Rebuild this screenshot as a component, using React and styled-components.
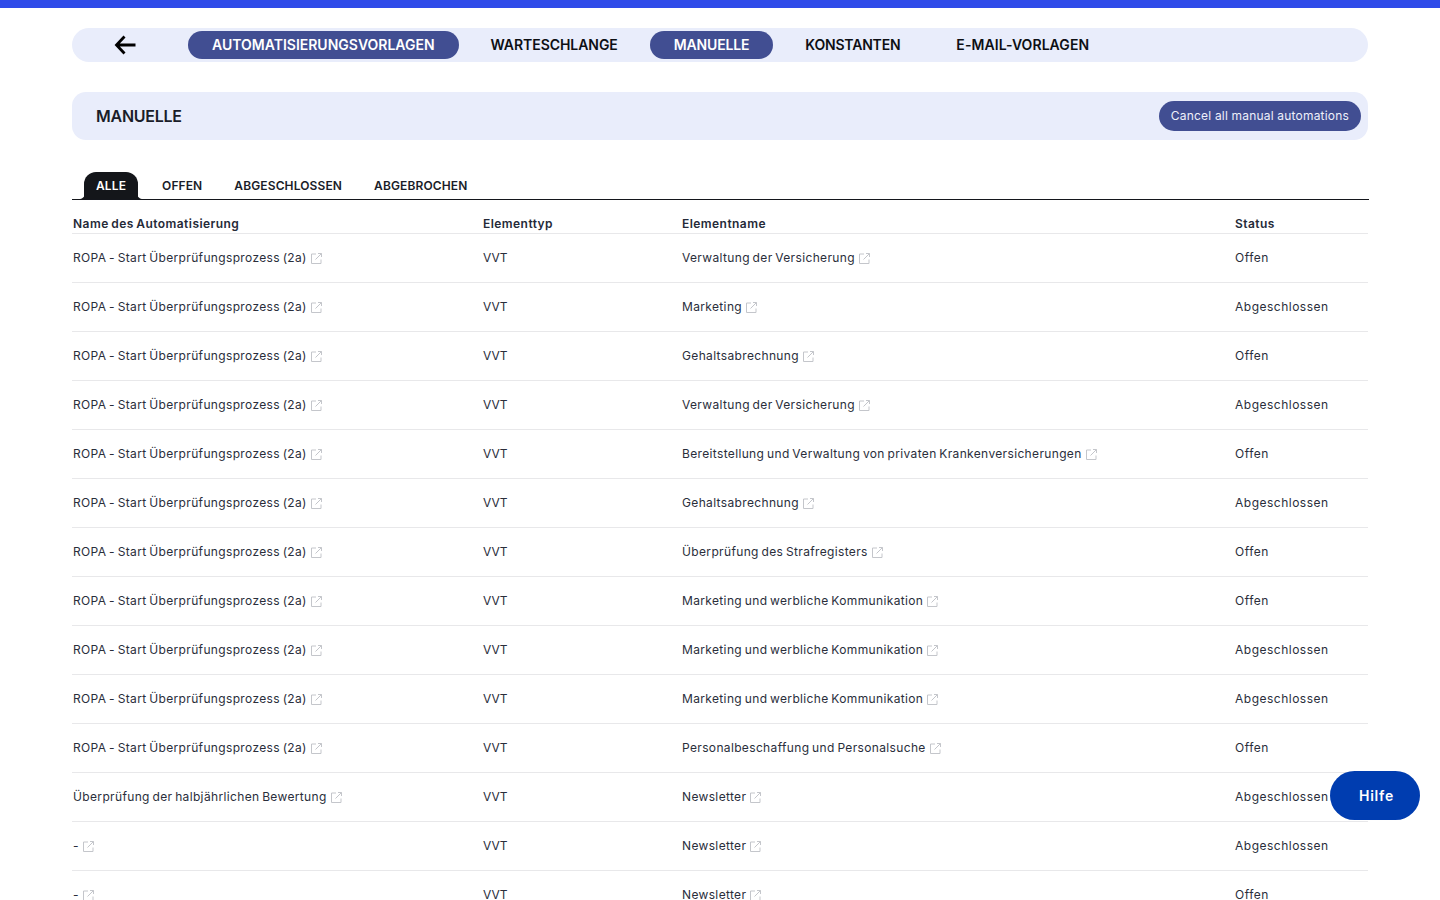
import React from "react";
import styled, { createGlobalStyle } from "styled-components";

const Global = createGlobalStyle`
  html, body { margin: 0; height: 100%; overflow: hidden; background: #fff; }
  body { font-family: Inter, "Liberation Sans", sans-serif; color: #1f2430; }
  * { box-sizing: border-box; }
`;

const Page = styled.div`
  height: 100vh;
  overflow: hidden;
  border-top: 8px solid #2f4be9;
  padding: 20px 72px 0;
`;

const Nav = styled.nav`
  display: flex;
  align-items: center;
  gap: 8px;
  height: 34px;
  border-radius: 17px;
  background: #e9edfb;
`;

const BackButton = styled.button`
  width: 108px;
  height: 28px;
  padding: 0;
  border: 0;
  background: none;
  color: #000;
  display: flex;
  align-items: center;
  justify-content: center;
`;

const NavItem = styled.a`
  height: 28px;
  padding: 0 24px 2px;
  border-radius: 14px;
  display: flex;
  align-items: center;
  font-size: 14px;
  font-weight: 600;
  letter-spacing: ${(p) => p.$spacing || 0}px;
  color: ${(p) => (p.$active ? "#fff" : "#0d0f14")};
  background: ${(p) => (p.$active ? "#414e92" : "transparent")};
`;

const Header = styled.header`
  margin-top: 30px;
  height: 48px;
  border-radius: 14px;
  background: #e9edfb;
  padding: 0 7px 0 24px;
  display: flex;
  align-items: center;
  justify-content: space-between;
`;

const Title = styled.h1`
  margin: 0;
  font-size: 16px;
  font-weight: 600;
  letter-spacing: -0.25px;
  color: #1a1d29;
`;

const CancelButton = styled.button`
  height: 30px;
  padding: 0 12px 2px;
  border: 0;
  border-radius: 15px;
  background: #414e92;
  color: #eef0fb;
  font: 400 12px Inter, sans-serif;
  letter-spacing: 0.19px;
`;

const Tabs = styled.div`
  margin-top: 32px;
  width: 1297px;
  height: 28px;
  padding-left: 12px;
  display: flex;
  align-items: stretch;
  border-bottom: 1px solid #14161c;
`;

const Tab = styled.a`
  position: relative;
  display: flex;
  align-items: center;
  padding: ${(p) => (p.$active ? "0 12px" : "0 16px")};
  margin-right: ${(p) => (p.$active ? "8px" : "0")};
  font-size: 12px;
  font-weight: 600;
  letter-spacing: 0.12px;
  color: ${(p) => (p.$active ? "#fff" : "#1a1d29")};
  background: ${(p) => (p.$active ? "#14161a" : "transparent")};
  border-radius: ${(p) => (p.$active ? "12px 12px 0 0" : "0")};
`;

const Flare = styled.svg`
  position: absolute;
  bottom: 0;
  width: 6px;
  height: 6px;
  ${(p) => (p.$side === "left" ? "left: -5px;" : "right: -5px;")}
`;

const Table = styled.table`
  width: 1296px;
  border-collapse: collapse;
  table-layout: fixed;
`;

const HeadCell = styled.th`
  height: 33px;
  padding: 14px 1px 0;
  text-align: left;
  font-size: 12px;
  font-weight: 600;
  letter-spacing: 0.44px;
  word-spacing: -0.9px;
  color: #252a38;
  vertical-align: middle;
  border-bottom: 1px solid #e8e8ea;
  &:nth-child(1) { width: 410px; }
  &:nth-child(2) { width: 199px; }
  &:nth-child(3) { width: 553px; }
`;

const Cell = styled.td`
  height: 49px;
  padding: 0 1px;
  font-size: 12px;
  font-weight: 400;
  letter-spacing: ${(p) => (p.$spacing === undefined ? 0.35 : p.$spacing)}px;
  word-spacing: -1px;
  color: #2a2e3b;
  vertical-align: middle;
  border-bottom: 1px solid #e8e8ea;
  white-space: nowrap;
`;

const LinkIcon = styled.svg`
  width: 11px;
  height: 11px;
  margin-left: 4px;
  vertical-align: -2px;
  color: #c4c6cb;
`;

const HelpButton = styled.button`
  position: fixed;
  left: 1330px;
  top: 771px;
  width: 90px;
  height: 49px;
  padding: 0 0 0 3px;
  border: 0;
  border-radius: 25px;
  background: #003db0;
  color: #fff;
  font: 600 14px Inter, sans-serif;
  letter-spacing: 0.8px;
`;

const External = () => (
  <LinkIcon viewBox="0 0 11 11" fill="none" stroke="currentColor" strokeWidth="1">
    <path d="M5 1H.5v9.5H10V6.5" />
    <path d="M4.5 6.5L10.5.5M7 .5h3.5V4" />
  </LinkIcon>
);

const tabs = ["ALLE", "OFFEN", "ABGESCHLOSSEN", "ABGEBROCHEN"];
const ropa = "ROPA - Start Überprüfungsprozess (2a)";
const rows = [
  [ropa, "Verwaltung der Versicherung", "Offen"],
  [ropa, "Marketing", "Abgeschlossen"],
  [ropa, "Gehaltsabrechnung", "Offen"],
  [ropa, "Verwaltung der Versicherung", "Abgeschlossen"],
  [ropa, "Bereitstellung und Verwaltung von privaten Krankenversicherungen", "Offen"],
  [ropa, "Gehaltsabrechnung", "Abgeschlossen"],
  [ropa, "Überprüfung des Strafregisters", "Offen"],
  [ropa, "Marketing und werbliche Kommunikation", "Offen"],
  [ropa, "Marketing und werbliche Kommunikation", "Abgeschlossen"],
  [ropa, "Marketing und werbliche Kommunikation", "Abgeschlossen"],
  [ropa, "Personalbeschaffung und Personalsuche", "Offen"],
  ["Überprüfung der halbjährlichen Bewertung", "Newsletter", "Abgeschlossen"],
  ["-", "Newsletter", "Abgeschlossen"],
  ["-", "Newsletter", "Offen"],
];

export default function App() {
  return (
    <>
      <Global />
      <Page>
        <Nav>
          <BackButton aria-label="Zurück">
            <svg width="24" height="24" viewBox="0 0 24 24" fill="none" stroke="currentColor" strokeWidth="2.8">
              <path d="M21.5 12H3M10.5 3.5L2.5 12l8 8.5" />
            </svg>
          </BackButton>
          <NavItem $active>AUTOMATISIERUNGSVORLAGEN</NavItem>
          <NavItem $spacing={-0.06}>WARTESCHLANGE</NavItem>
          <NavItem $active $spacing={-0.15}>MANUELLE</NavItem>
          <NavItem $spacing={-0.2}>KONSTANTEN</NavItem>
          <NavItem $spacing={0.07}>E-MAIL-VORLAGEN</NavItem>
        </Nav>
        <Header>
          <Title>MANUELLE</Title>
          <CancelButton>Cancel all manual automations</CancelButton>
        </Header>
        <Tabs>
          {tabs.map((t, i) => (
            <Tab key={t} $active={i === 0}>
              {i === 0 && (
                <>
                  <Flare $side="left" viewBox="0 0 6 6"><path d="M6 0v6H0c3 0 6-2 6-6z" fill="#14161a" /></Flare>
                  <Flare $side="right" viewBox="0 0 6 6"><path d="M0 0v6h6C3 6 0 4 0 0z" fill="#14161a" /></Flare>
                </>
              )}
              {t}
            </Tab>
          ))}
        </Tabs>
        <Table>
          <thead>
            <tr>
              <HeadCell>Name des Automatisierung</HeadCell>
              <HeadCell>Elementtyp</HeadCell>
              <HeadCell>Elementname</HeadCell>
              <HeadCell>Status</HeadCell>
            </tr>
          </thead>
          <tbody>
            {rows.map((r, i) => (
              <tr key={i}>
                <Cell>{r[0]}<External /></Cell>
                <Cell $spacing={0}>VVT</Cell>
                <Cell>{r[1]}<External /></Cell>
                <Cell $spacing={0.5}>{r[2]}</Cell>
              </tr>
            ))}
          </tbody>
        </Table>
      </Page>
      <HelpButton>Hilfe</HelpButton>
    </>
  );
}
